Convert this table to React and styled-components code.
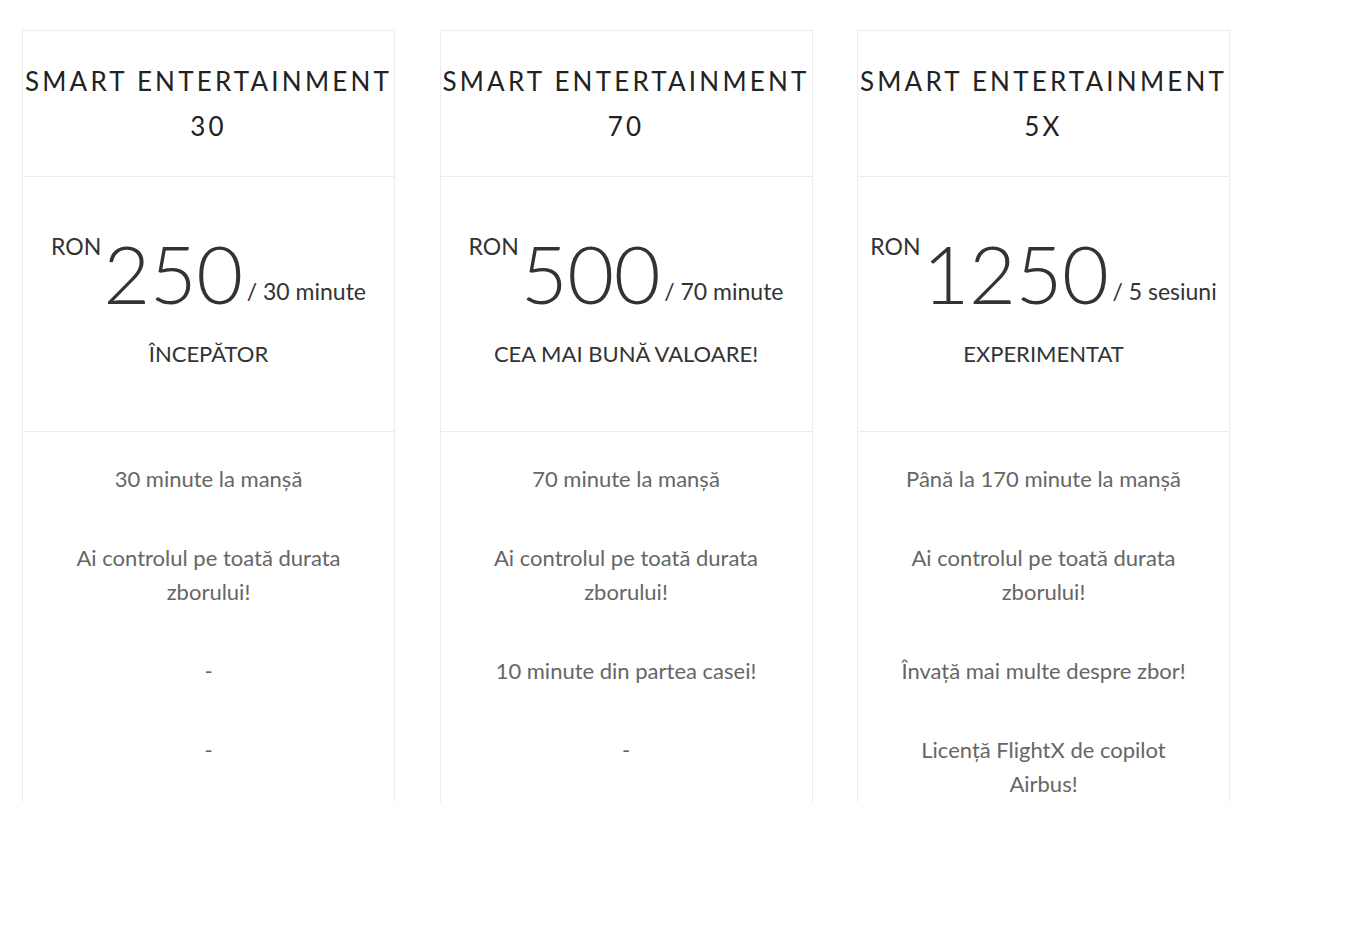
import React from "react";
import styled, { createGlobalStyle } from "styled-components";

const Global = createGlobalStyle`
  html, body { margin: 0; padding: 0; background: #fff; }
  body { font-family: Lato, "Open Sans", sans-serif; color: #333; }
`;

const Viewport = styled.div`
  height: 802px;
  overflow: hidden;
  padding: 30px 0 0 22px;
  box-sizing: border-box;
`;

const Grid = styled.div`
  display: flex;
  gap: 44.5px;
  align-items: flex-start;
`;

const Card = styled.div`
  width: 373px;
  min-height: 800px;
  box-sizing: border-box;
  border: 1px solid #ececec;
  background: #fff;
  text-align: center;
`;

const Header = styled.div`
  padding: 28px 0 27px;
  border-bottom: 1px solid #ececec;
`;

const Title = styled.h3`
  margin: 0;
  font-family: Lato, sans-serif;
  font-weight: 400;
  font-size: 26px;
  line-height: 45px;
  letter-spacing: 3.2px;
  color: #222;
  white-space: nowrap;
`;

const PriceBox = styled.div`
  height: 255px;
  padding-top: 56px;
  box-sizing: border-box;
  border-bottom: 1px solid #ececec;
`;

const PriceRow = styled.div`
  display: flex;
  justify-content: center;
  align-items: baseline;
`;

const Currency = styled.span`
  align-self: flex-start;
  font-size: 23px;
  line-height: 22px;
  margin-top: 2px;
  color: #333;
`;

const Amount = styled.span`
  font-size: 81px;
  font-weight: 300;
  line-height: 80px;
  color: #333;
  margin-left: 2px;
  letter-spacing: -0.5px;
`;

const Period = styled.span`
  font-size: 23px;
  color: #333;
  margin-left: 4px;
  transform: translateY(-4px);
`;

const Level = styled.div`
  margin-top: 27px;
  font-size: 22px;
  color: #333;
`;

const Features = styled.ul`
  list-style: none;
  margin: 0;
  padding: 30px 40px 40px;
`;

const Feature = styled.li`
  font-size: 22px;
  line-height: 34px;
  color: #666;
  & + & { margin-top: 45px; }
`;

const plans = [
  {
    title: ["SMART ENTERTAINMENT", "30"],
    amount: "250",
    period: "/ 30 minute",
    level: "ÎNCEPĂTOR",
    features: ["30 minute la manșă", "Ai controlul pe toată durata zborului!", "-", "-"],
  },
  {
    title: ["SMART ENTERTAINMENT", "70"],
    amount: "500",
    period: "/ 70 minute",
    level: "CEA MAI BUNĂ VALOARE!",
    features: ["70 minute la manșă", "Ai controlul pe toată durata zborului!", "10 minute din partea casei!", "-"],
  },
  {
    title: ["SMART ENTERTAINMENT", "5X"],
    amount: "1250",
    period: "/ 5 sesiuni",
    level: "EXPERIMENTAT",
    features: [
      "Până la 170 minute la manșă",
      "Ai controlul pe toată durata zborului!",
      "Învață mai multe despre zbor!",
      "Licență FlightX de copilot Airbus!",
    ],
  },
];

export default function App() {
  return (
    <>
      <Global />
      <Viewport>
        <Grid>
          {plans.map((p) => (
            <Card key={p.amount}>
              <Header>
                <Title>
                  {p.title[0]}
                  <br />
                  {p.title[1]}
                </Title>
              </Header>
              <PriceBox>
                <PriceRow>
                  <Currency>RON</Currency>
                  <Amount>{p.amount}</Amount>
                  <Period>{p.period}</Period>
                </PriceRow>
                <Level>{p.level}</Level>
              </PriceBox>
              <Features>
                {p.features.map((f, i) => (
                  <Feature key={i}>{f}</Feature>
                ))}
              </Features>
            </Card>
          ))}
        </Grid>
      </Viewport>
    </>
  );
}
